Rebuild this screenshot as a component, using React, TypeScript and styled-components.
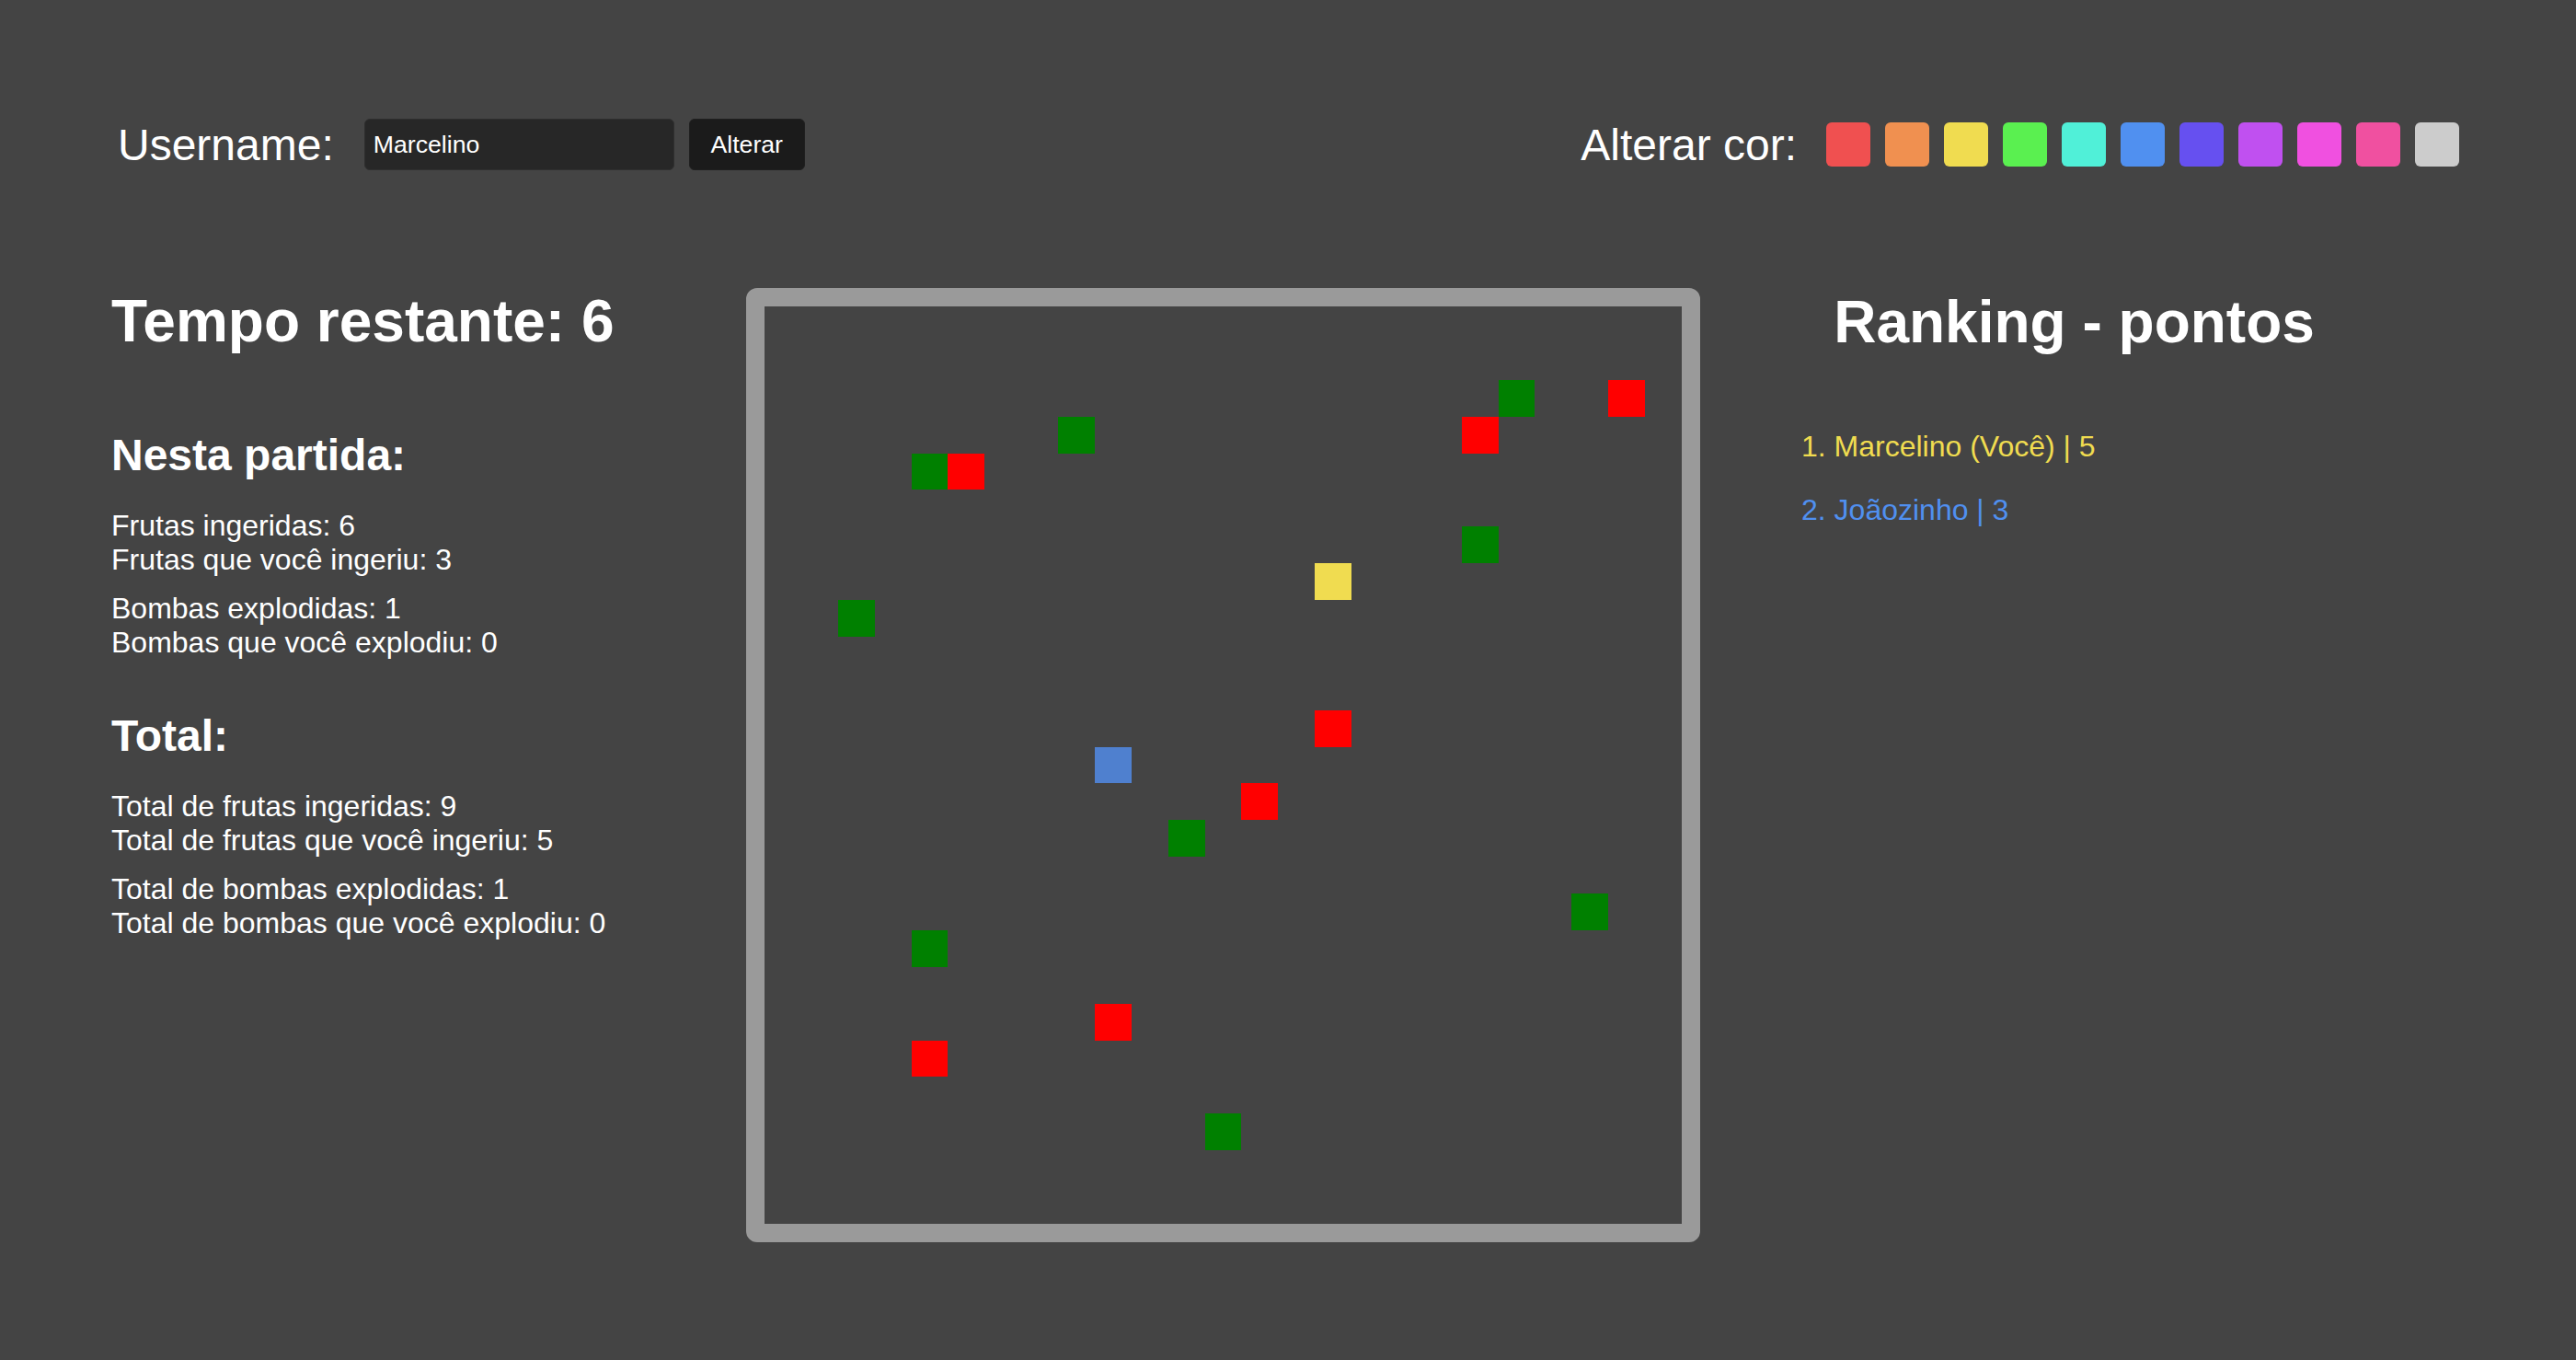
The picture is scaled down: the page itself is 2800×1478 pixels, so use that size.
import React from "react";
import styled, { createGlobalStyle } from "styled-components";

const Global = createGlobalStyle`
  html, body { margin: 0; padding: 0; background: #444444; }
  body { font-family: "Liberation Sans", Arial, sans-serif; color: #ffffff; }
  * { box-sizing: border-box; }
`;

const Page = styled.div`
  width: 2800px;
  min-height: 1478px;
  background: #444444;
`;

const Header = styled.header`
  display: flex;
  justify-content: space-between;
  align-items: center;
  padding: 129px 127px 0 128px;
  height: 185px;
`;

const Group = styled.div`
  display: flex;
  align-items: center;
`;

const Label = styled.span`
  font-size: 48px;
  margin-right: ${(p: { $gap: number }) => p.$gap}px;
  line-height: 55px;
`;

const NameInput = styled.input`
  width: 337px;
  height: 56px;
  background: #272727;
  border: 1px solid #2f2f2f;
  border-radius: 6px;
  color: #ffffff;
  font-family: "Liberation Sans", Arial, sans-serif;
  font-size: 26.67px;
  padding: 0 9px;
  outline: none;
`;

const Button = styled.button`
  margin-left: 16px;
  width: 126px;
  height: 56px;
  background: #1b1b1b;
  border: 1px solid #1f1f1f;
  border-radius: 6px;
  color: #ffffff;
  font-family: "Liberation Sans", Arial, sans-serif;
  font-size: 26.67px;
  padding: 0;
`;

const Swatches = styled.div`
  display: flex;
  gap: 16px;
`;

const Swatch = styled.div<{ $c: string }>`
  width: 48px;
  height: 48px;
  border-radius: 6px;
  background: ${(p) => p.$c};
`;

const Main = styled.main`
  display: flex;
  align-items: flex-start;
  padding: 127px 0 0 121px;
`;

const LeftCol = styled.section`
  width: 690px;
  display: flex;
  flex-direction: column;
`;

const Title = styled.h1`
  margin: 0;
  font-size: 64px;
  font-weight: 700;
  line-height: 74px;
`;

const SubTitle = styled.h2<{ $top: number }>`
  margin: ${(p) => p.$top}px 0 31px 0;
  font-size: 48px;
  font-weight: 700;
  line-height: 55px;
`;

const StatGroup = styled.div`
  & + & {
    margin-top: 16px;
  }
`;

const StatLine = styled.div`
  font-size: 32px;
  line-height: 37px;
`;

const Board = styled.div`
  margin-top: 1px;
  width: 1037px;
  height: 1037px;
  border: 20px solid #9a9a9a;
  border-radius: 12px;
  background: #444444;
  display: grid;
  grid-template-columns: repeat(25, 1fr);
  grid-template-rows: repeat(25, 1fr);
`;

const Cell = styled.div<{ $x: number; $y: number; $c: string }>`
  grid-column: ${(p) => p.$x + 1};
  grid-row: ${(p) => p.$y + 1};
  background: ${(p) => p.$c};
`;

const RightCol = styled.section`
  margin-top: 1px;
  width: 813px;
  display: flex;
  flex-direction: column;
`;

const RankTitle = styled.h1`
  margin: 0;
  font-size: 64px;
  font-weight: 700;
  line-height: 74px;
  text-align: center;
`;

const RankList = styled.ol`
  list-style: none;
  margin: 80px 0 0 0;
  padding: 0 0 0 110px;
  display: flex;
  flex-direction: column;
  gap: 32px;
`;

const RankItem = styled.li<{ $c: string }>`
  font-size: 32px;
  line-height: 37px;
  color: ${(p) => p.$c};
`;

const COLORS = [
  "#f05050",
  "#f09050",
  "#f0dc50",
  "#5af050",
  "#50f0d8",
  "#5090f0",
  "#6650f0",
  "#c050f0",
  "#f050e0",
  "#f050a0",
  "#cccccc",
];

const G = "#008000";
const R = "#ff0000";

const CELLS: { x: number; y: number; c: string }[] = [
  { x: 4, y: 4, c: G },
  { x: 5, y: 4, c: R },
  { x: 8, y: 3, c: G },
  { x: 20, y: 2, c: G },
  { x: 23, y: 2, c: R },
  { x: 19, y: 3, c: R },
  { x: 19, y: 6, c: G },
  { x: 15, y: 7, c: "#f0dc50" },
  { x: 2, y: 8, c: G },
  { x: 15, y: 11, c: R },
  { x: 9, y: 12, c: "#4f80cf" },
  { x: 13, y: 13, c: R },
  { x: 11, y: 14, c: G },
  { x: 22, y: 16, c: G },
  { x: 4, y: 17, c: G },
  { x: 9, y: 19, c: R },
  { x: 4, y: 20, c: R },
  { x: 12, y: 22, c: G },
];

export default function App() {
  return (
    <Page>
      <Global />
      <Header>
        <Group>
          <Label $gap={33}>Username:</Label>
          <NameInput defaultValue="Marcelino" />
          <Button>Alterar</Button>
        </Group>
        <Group>
          <Label $gap={32}>Alterar cor:</Label>
          <Swatches>
            {COLORS.map((c) => (
              <Swatch key={c} $c={c} />
            ))}
          </Swatches>
        </Group>
      </Header>
      <Main>
        <LeftCol>
          <Title>Tempo restante: 6</Title>
          <SubTitle $top={81}>Nesta partida:</SubTitle>
          <StatGroup>
            <StatLine>Frutas ingeridas: 6</StatLine>
            <StatLine>Frutas que você ingeriu: 3</StatLine>
          </StatGroup>
          <StatGroup>
            <StatLine>Bombas explodidas: 1</StatLine>
            <StatLine>Bombas que você explodiu: 0</StatLine>
          </StatGroup>
          <SubTitle $top={55}>Total:</SubTitle>
          <StatGroup>
            <StatLine>Total de frutas ingeridas: 9</StatLine>
            <StatLine>Total de frutas que você ingeriu: 5</StatLine>
          </StatGroup>
          <StatGroup>
            <StatLine>Total de bombas explodidas: 1</StatLine>
            <StatLine>Total de bombas que você explodiu: 0</StatLine>
          </StatGroup>
        </LeftCol>
        <Board>
          {CELLS.map((c, i) => (
            <Cell key={i} $x={c.x} $y={c.y} $c={c.c} />
          ))}
        </Board>
        <RightCol>
          <RankTitle>Ranking - pontos</RankTitle>
          <RankList>
            <RankItem $c="#f0dc50">1. Marcelino (Você) | 5</RankItem>
            <RankItem $c="#5090f0">2. Joãozinho | 3</RankItem>
          </RankList>
        </RightCol>
      </Main>
    </Page>
  );
}
